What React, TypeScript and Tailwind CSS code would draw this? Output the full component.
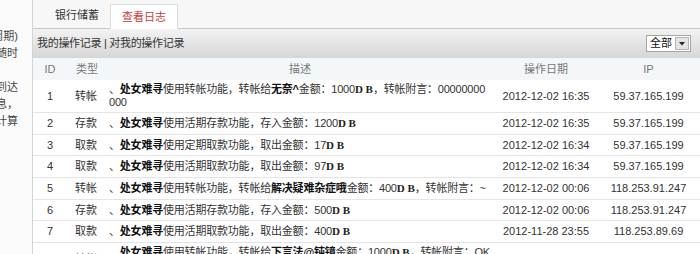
import * as React from 'react'

const Db = () => <b className="font-['Liberation_Serif'] font-bold text-[#222] tracking-normal">D B</b>

const Nick = ({ children }: { children: React.ReactNode }) => <b className="font-bold text-[#111]">{children}</b>

const rows = [
  {
    id: '1',
    type: '转帐',
    desc: (
      <>
        、<Nick>处女难寻</Nick>使用转帐功能，转帐给<Nick>无奈^</Nick>金额：1000<Db />，转帐附言：00000000000
      </>
    ),
    date: '2012-12-02 16:35',
    ip: '59.37.165.199',
  },
  {
    id: '2',
    type: '存款',
    desc: (
      <>
        、<Nick>处女难寻</Nick>使用活期存款功能，存入金额：1200<Db />
      </>
    ),
    date: '2012-12-02 16:35',
    ip: '59.37.165.199',
  },
  {
    id: '3',
    type: '取款',
    desc: (
      <>
        、<Nick>处女难寻</Nick>使用定期取款功能，取出金额：17<Db />
      </>
    ),
    date: '2012-12-02 16:34',
    ip: '59.37.165.199',
  },
  {
    id: '4',
    type: '取款',
    desc: (
      <>
        、<Nick>处女难寻</Nick>使用活期取款功能，取出金额：97<Db />
      </>
    ),
    date: '2012-12-02 16:34',
    ip: '59.37.165.199',
  },
  {
    id: '5',
    type: '转帐',
    desc: (
      <>
        、<Nick>处女难寻</Nick>使用转帐功能，转帐给<Nick>解决疑难杂症哦</Nick>金额：400<Db />，转帐附言：~
      </>
    ),
    date: '2012-12-02 00:06',
    ip: '118.253.91.247',
  },
  {
    id: '6',
    type: '存款',
    desc: (
      <>
        、<Nick>处女难寻</Nick>使用活期存款功能，存入金额：500<Db />
      </>
    ),
    date: '2012-12-02 00:06',
    ip: '118.253.91.247',
  },
  {
    id: '7',
    type: '取款',
    desc: (
      <>
        、<Nick>处女难寻</Nick>使用活期取款功能，取出金额：400<Db />
      </>
    ),
    date: '2012-11-28 23:55',
    ip: '118.253.89.69',
  },
  {
    id: '8',
    type: '转帐',
    desc: (
      <>
        、<Nick>处女难寻</Nick>使用转帐功能，转帐给<Nick>下言法@钝镜</Nick>金额：1000<Db />，转帐附言：OK
        <br />
        谢谢
      </>
    ),
    date: '2012-11-28 23:50',
    ip: '118.253.89.69',
  },
]

const cols = 'grid grid-cols-[34px_41px_384px_108px_100px] items-center'

export default function App() {
  return (
    <div className="w-[700px] h-[254px] overflow-hidden flex bg-white text-[11px] text-[#333] font-['Liberation_Sans','Noto_Sans_CJK_SC',sans-serif]">
      {/* cut-off sidebar text */}
      <div className="w-[32px] shrink-0 bg-[#fbfbfb] pt-[28px] leading-[17px] text-[#444]">
        <div className="w-[18px] overflow-hidden flex flex-col items-end">
          <span className="whitespace-nowrap">周期)</span>
          <span className="whitespace-nowrap">可以随时</span>
          <span className="h-[17px]"></span>
          <span className="whitespace-nowrap">间到达</span>
          <span className="whitespace-nowrap">休息，</span>
          <span className="whitespace-nowrap">来计算</span>
        </div>
      </div>
      <div className="w-px shrink-0 bg-[#d4d4d4]"></div>

      <div className="flex-1 flex flex-col bg-[#f7f7f7]">
        <div className="h-[28px] shrink-0 flex items-end pl-[11px] text-[11px]">
          <span className="h-[25px] px-[11px] flex items-center text-[#333]">银行储蓄</span>
          <span className="h-[25px] px-[11px] flex items-center bg-white border border-b-0 border-[#dcdcdc] text-[#c8403a] -mb-px relative">
            查看日志
          </span>
        </div>

        <div className="h-[30px] shrink-0 border-t border-[#c8c8c8] bg-linear-to-b from-[#f3f3f3] to-[#d6d6d6] flex items-center justify-between pl-[4px] pr-[9px]">
          <span className="text-[#333] tracking-[-0.3px]">我的操作记录 | 对我的操作记录</span>
          <div className="flex items-center h-[17px] border border-[#a5a5a5] bg-white">
            <span className="px-[3px] text-[11px] text-[#111] leading-[15px]">全部</span>
            <span className="w-[14px] h-[13px] mr-px bg-[#e4e4e4] border border-[#b5b5b5] flex items-center justify-center">
              <svg width="6" height="4" viewBox="0 0 6 4">
                <path d="M0 0h6L3 3.5z" fill="#222" />
              </svg>
            </span>
          </div>
        </div>

        <div className="flex-1 bg-white">
          <div className={`${cols} h-[22px] bg-[#f4f7fa] text-[#777]`}>
            <span className="text-center">ID</span>
            <span className="pl-[9px]">类型</span>
            <span className="text-center">描述</span>
            <span className="text-center">操作日期</span>
            <span className="text-center pr-[3px]">IP</span>
          </div>
          {rows.map((r) => (
            <div key={r.id} className={`${cols} min-h-[21.7px] py-[3px] leading-[13px] border-b border-[#e4e4e4]`}>
              <span className="text-center">{r.id}</span>
              <span className="pl-[8px]">{r.type}</span>
              <span className="pl-[1px] pr-[2px] break-all tracking-[-0.2px]">{r.desc}</span>
              <span className="text-center">{r.date}</span>
              <span className="text-center pr-[3px]">{r.ip}</span>
            </div>
          ))}
        </div>
      </div>
    </div>
  )
}
